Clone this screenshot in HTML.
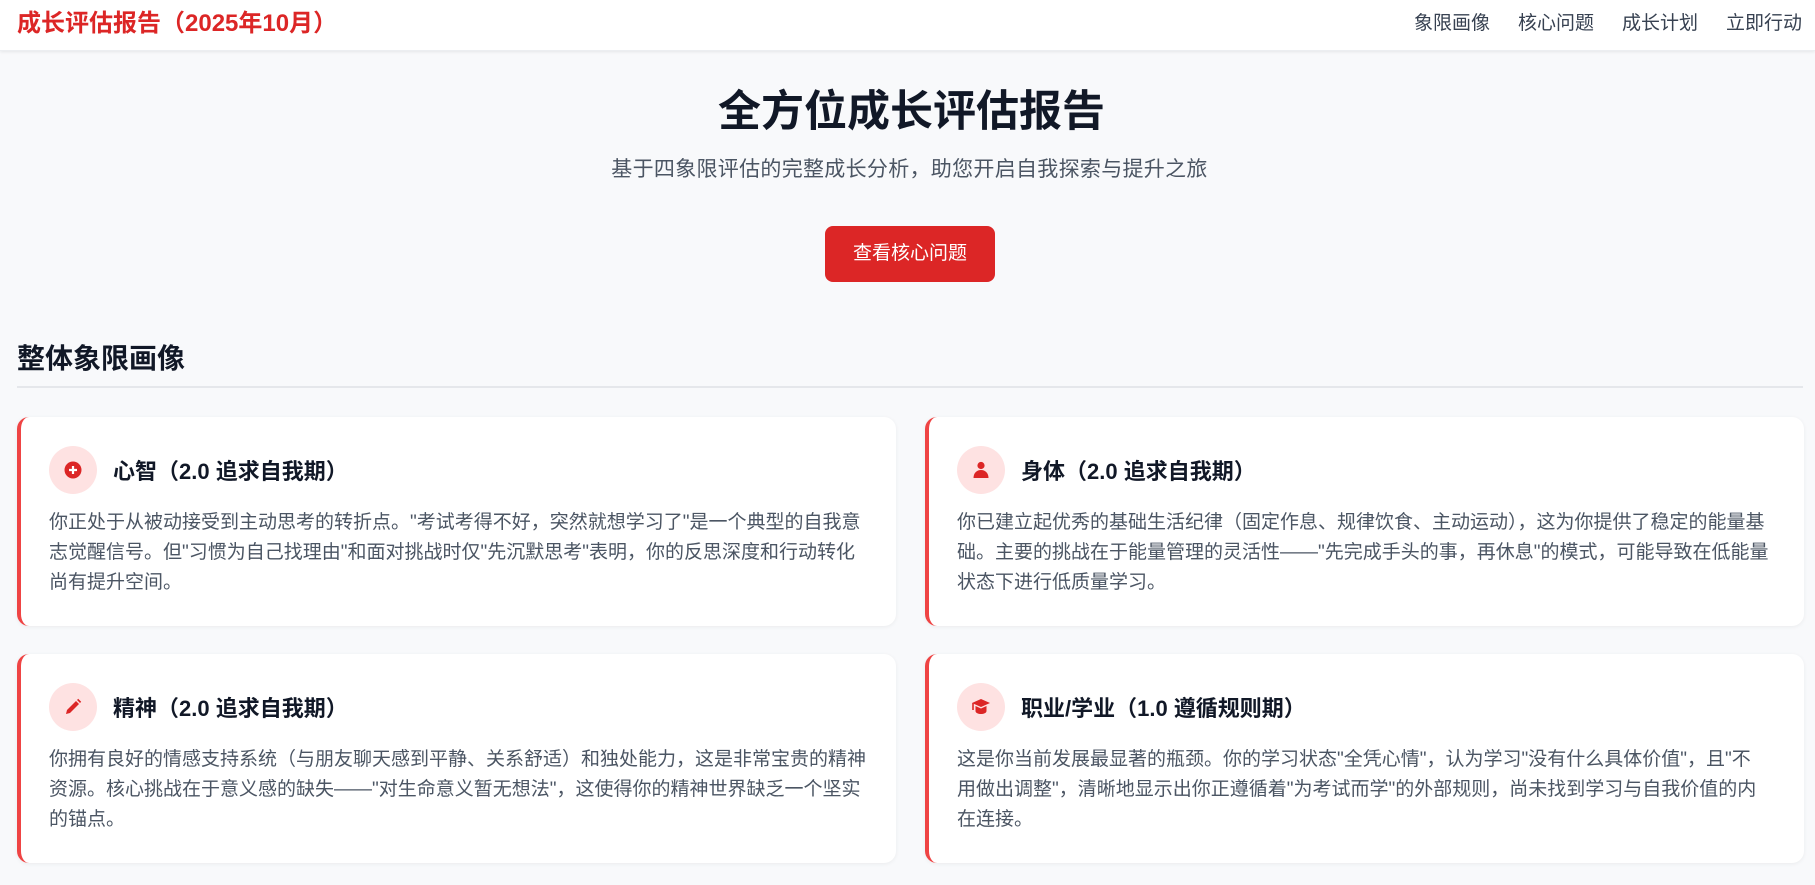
<!DOCTYPE html>
<html><head><meta charset="utf-8">
<style>
*{box-sizing:border-box;margin:0;padding:0}
body{width:1815px;height:885px;overflow:hidden;background:#f8f9fb;font-family:"Liberation Sans","Noto Sans CJK SC",sans-serif;color:#111827}
nav{position:absolute;left:0;top:0;width:1815px;height:51px;background:#fff;box-shadow:0 1px 3px rgba(0,0,0,.08);border-bottom:1px solid #eceef1}
.brand{position:absolute;left:17px;top:7px;font-size:24px;font-weight:700;color:#dc2626;line-height:34px}
.links{position:absolute;right:13px;top:8px;display:flex;gap:28px;font-size:19px;color:#374151;line-height:32px}
h1{position:absolute;left:4px;width:1815px;top:86px;text-align:center;font-size:43px;font-weight:700;line-height:52px;color:#111827}
.sub{position:absolute;left:2px;width:1815px;top:156px;text-align:center;font-size:21px;line-height:28px;color:#4b5563;letter-spacing:0.3px}
.btn{position:absolute;left:825px;top:226px;width:170px;height:56px;background:#dc2626;border-radius:8px;color:#fff;font-size:19px;line-height:56px;text-align:center}
h2{position:absolute;left:17px;top:340px;font-size:28px;font-weight:700;line-height:38px}
.rule{position:absolute;left:17px;top:386px;width:1786px;height:2px;background:#e5e7eb}
.card{position:absolute;width:879px;height:209px;background:#fff;border-radius:12px;border-left:4px solid #ef4444;box-shadow:0 1px 4px rgba(0,0,0,.06);padding:29px 28px}
.hd{display:flex;align-items:center;height:48px}
.ic{width:48px;height:48px;border-radius:50%;background:#fee2e2;display:flex;align-items:center;justify-content:center;margin-right:16px;flex:none}
.hd b{font-size:22px;font-weight:700;color:#111827}
.card p{margin-top:14px;font-size:19px;line-height:30px;color:#4b5563}
</style></head><body>
<nav><div class="brand">成长评估报告（2025年10月）</div>
<div class="links"><span>象限画像</span><span>核心问题</span><span>成长计划</span><span>立即行动</span></div></nav>
<h1>全方位成长评估报告</h1>
<div class="sub">基于四象限评估的完整成长分析，助您开启自我探索与提升之旅</div>
<div class="btn">查看核心问题</div>
<h2>整体象限画像</h2>
<div class="rule"></div>

<div class="card" style="left:17px;top:417px">
<div class="hd"><div class="ic"><svg width="18" height="18" viewBox="0 0 18 18"><circle cx="9" cy="9" r="8.5" fill="#dc2626"/><path d="M9 5v8M5 9h8" stroke="#fff" stroke-width="2.2"/></svg></div><b>心智（2.0 追求自我期）</b></div>
<p>你正处于从被动接受到主动思考的转折点。"考试考得不好，突然就想学习了"是一个典型的自我意<br>志觉醒信号。但"习惯为自己找理由"和面对挑战时仅"先沉默思考"表明，你的反思深度和行动转化<br>尚有提升空间。</p></div>

<div class="card" style="left:925px;top:417px">
<div class="hd"><div class="ic"><svg width="18" height="18" viewBox="0 0 18 18"><circle cx="9" cy="4.5" r="3.6" fill="#dc2626"/><path d="M1.5 17c0-5 3.3-8 7.5-8s7.5 3 7.5 8z" fill="#dc2626"/></svg></div><b>身体（2.0 追求自我期）</b></div>
<p>你已建立起优秀的基础生活纪律（固定作息、规律饮食、主动运动），这为你提供了稳定的能量基<br>础。主要的挑战在于能量管理的灵活性——"先完成手头的事，再休息"的模式，可能导致在低能量<br>状态下进行低质量学习。</p></div>

<div class="card" style="left:17px;top:654px">
<div class="hd"><div class="ic"><svg width="18" height="18" viewBox="0 0 18 18"><path d="M2 16l1-4 9-9 3 3-9 9z" fill="#dc2626"/><path d="M13 2l1.2-1.2 3 3L16 5z" fill="#dc2626"/></svg></div><b>精神（2.0 追求自我期）</b></div>
<p>你拥有良好的情感支持系统（与朋友聊天感到平静、关系舒适）和独处能力，这是非常宝贵的精神<br>资源。核心挑战在于意义感的缺失——"对生命意义暂无想法"，这使得你的精神世界缺乏一个坚实<br>的锚点。</p></div>

<div class="card" style="left:925px;top:654px">
<div class="hd"><div class="ic"><svg width="20" height="18" viewBox="0 0 20 18"><path d="M10 1l9 4-9 4-9-4z" fill="#dc2626"/><path d="M4.5 8v5c0 2 3 3 5.5 3s5.5-1 5.5-3V8l-5.5 2.5z" fill="#dc2626"/><path d="M2 5v7" stroke="#dc2626" stroke-width="1.6"/></svg></div><b>职业/学业（1.0 遵循规则期）</b></div>
<p>这是你当前发展最显著的瓶颈。你的学习状态"全凭心情"，认为学习"没有什么具体价值"，且"不<br>用做出调整"，清晰地显示出你正遵循着"为考试而学"的外部规则，尚未找到学习与自我价值的内<br>在连接。</p></div>
</body></html>
